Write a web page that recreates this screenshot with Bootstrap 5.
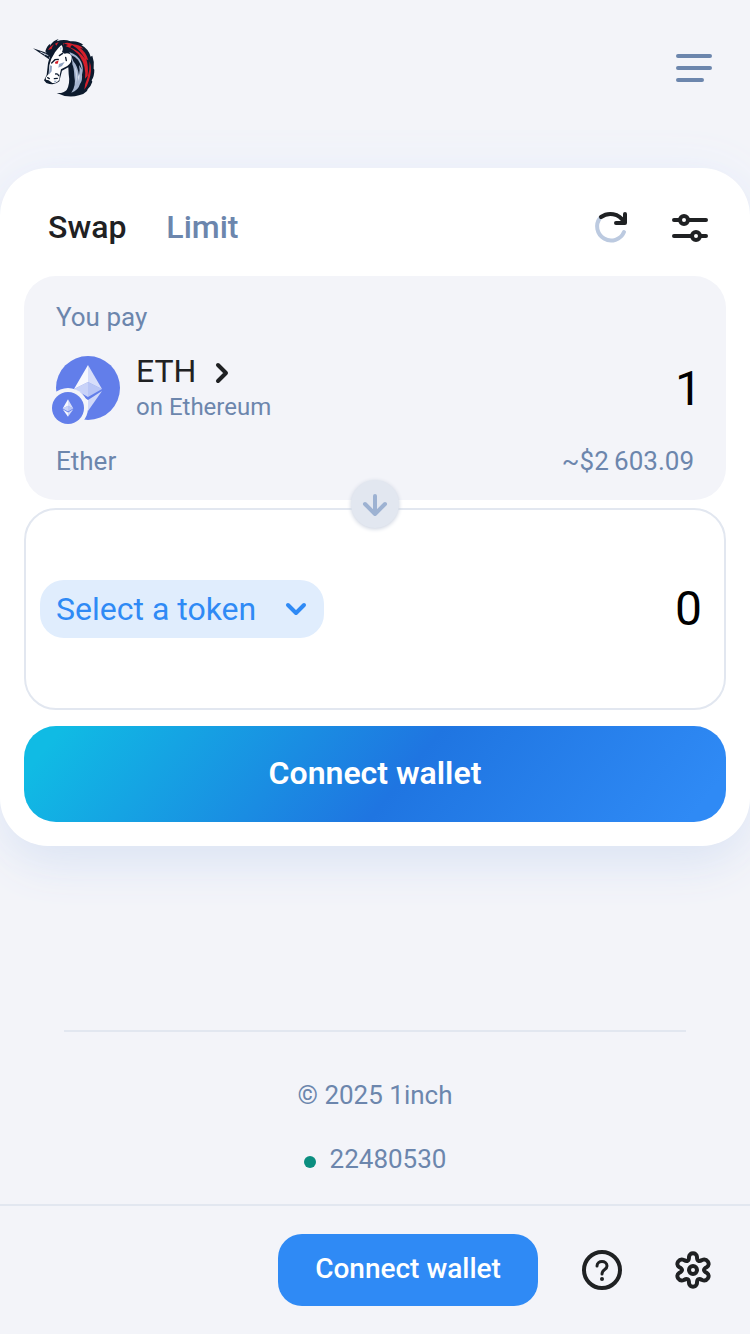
<!DOCTYPE html>
<html lang="en">
<head>
<meta charset="utf-8">
<meta name="viewport" content="width=device-width, initial-scale=1">
<title>1inch Swap</title>
<link href="https://cdn.jsdelivr.net/npm/bootstrap@5.3.0/dist/css/bootstrap.min.css" rel="stylesheet">
<style>
:root { --ink: #1f2123; --muted: #6c86ad; --page: #f3f4f9; --line: #e2e7f0; --accent: #2f8af5; }
body { font-family: Roboto, "Liberation Sans", sans-serif; font-size: 26px; line-height: 32px; color: var(--ink); background: var(--page); overflow-x: hidden; }
svg { display: block; flex: none; overflow: visible; }
.muted { color: var(--muted); }
.icon-btn { border: 0; padding: 0; background: none; color: inherit; }
.top-bar { height: 136px; padding: 0 32px; }
.swap-card { margin-top: 32px; padding: 0 24px 24px; border-radius: 48px; background: #fff; box-shadow: 0 24px 48px -8px #dce4f3, 0 0 48px #ebf0fb; }
.tab-row { height: 108px; padding: 10px 18px 0 24px; }
.tab-link { font-size: 32px; font-weight: 500; line-height: 40px; text-decoration: none; color: var(--muted); }
.tab-link.active { color: var(--ink); }
.tab-tools { gap: 44px; }
.token-box { border-radius: 32px; }
.pay-box { height: 224px; padding: 25px 32px 23px; background: var(--page); }
.get-box { min-height: 202px; margin-top: 8px; padding: 0 22px 0 14px; border: 2px solid var(--line); }
.token-name { font-size: 32px; line-height: 36px; }
.network { font-size: 24px; line-height: 36px; }
.amount { width: 240px; border: 0; padding: 0; background: none; font-size: 48px; line-height: 56px; text-align: right; color: #000; outline: 0; }
.pay-box .amount { margin-right: -8px; }
.flip-btn { width: 48px; height: 48px; background: var(--line); color: #9db2d2; box-shadow: 0 1px 4px #c8cfdd; }
.select-btn { height: 58px; padding: 0 12px 0 16px; border: 0; border-radius: 24px; background: #e0edfd; color: var(--accent); font-size: 32px; }
.connect-btn { height: 96px; margin-top: 16px; padding: 0 0 2px; border: 0; border-radius: 32px; font-size: 32px; font-weight: 600; color: #fff; background: linear-gradient(129deg, #10bbe4 5%, #1f75e1 54%, #2f8af5 95%); }
.page-end { margin: 0 64px; border-top: 2px solid var(--line); padding: 47px 0 13px; }
.block-link { gap: 14px; }
.dot { width: 12px; height: 12px; margin-top: 6px; background: #0b8e80; }
.bottom-bar { height: 130px; padding: 0 32px; gap: 44px; border-top: 2px solid var(--line); background: var(--page); }
.wallet-btn { width: 260px; height: 72px; padding: 0 0 2px; border: 0; border-radius: 24px; font-size: 28px; font-weight: 500; color: #fff; background: var(--accent); }
</style>
</head>
<body>
<div class="d-flex flex-column min-vh-100">
  <header class="top-bar d-flex align-items-center justify-content-between">
    <a href="#" aria-label="1inch home">
      <svg width="64" height="64" viewBox="24 18 192 192">
        <path fill="#0d1b2e" d="M64 64Q68 48 79 41L78 47Q88 31 104 27L98 34Q121 26 139 34Q161 31 178 44L172 45Q194 57 200 80L205 77Q212 96 209 116L211 119Q211 139 203 151L205 155Q200 171 191 178L189 183Q179 194 165 196Q132 206 98 189Q118 191 128 180Q139 161 134 132L133 112L114 122L106 154Q92 168 67 159L60 151L68 135L72 100L77 82Z"/>
        <path fill="#d51f2b" d="M72 60Q80 48 90 43Q84 51 83 57ZM93 41L104 36L97 47ZM118 40Q134 35 148 43Q166 44 178 56L168 54Q186 66 193 91L187 88Q194 111 191 137L183 146Q187 109 169 82Q155 58 118 46ZM197 94Q206 122 194 154Q190 168 181 179Q182 162 190 145Q198 120 197 94Z"/>
        <path fill="#0d1b2e" d="M144 45Q170 60 184 88Q168 63 138 52ZM120 40L132 45L118 51Z"/>
        <path fill="#a4b4cf" d="M136 66Q162 74 172 97Q180 115 174 134Q176 151 168 162Q163 181 142 188Q157 168 151 139Q150 113 145 103Q146 88 136 66Z"/>
        <path fill="#d9e1ee" d="M151 108Q164 127 155 163Q159 132 151 108ZM161 141L167 132L165 154Z"/>
        <path fill="#0d1b2e" d="M141 75Q167 83 174 119L165 105Q169 122 165 136Q161 108 148 94Z"/>
        <path fill="#fff" d="M93 67Q101 55 112 45Q120 54 114 66L122 71Q137 67 142 79Q146 96 130 108L111 118L107 136L106 149Q97 161 85 159L74 151L66 149L65 143L74 131L76 106L82 86Z"/>
        <path fill="#8fa2c0" d="M78 106L84 108L83 124L74 135ZM105 102L122 96L114 108L103 113ZM109 52L113 53L109 62ZM90 152L99 152L92 158Z"/>
        <path fill="none" stroke="#0d1b2e" stroke-width="4" stroke-linecap="round" d="M83 99L93 89L103 88M116 70L106 77M95 132Q101 130 104 137M91 146L100 145M71 143L76 146M125 82L127 92"/>
        <path fill="#d51f2b" d="M93 96L104 91L101 101L94 101Z"/>
        <path fill="#0d1b2e" d="M27 55L76 71L75 88Z"/>
        <path stroke="#c6cfdd" stroke-width="3" d="M49 66L73 77M59 76L65 72"/>
      </svg>
    </a>
    <button class="icon-btn" type="button" aria-label="Menu">
      <svg width="48" height="48" viewBox="0 0 48 48" fill="none" stroke="#6c86ad" stroke-width="4" stroke-linecap="round"><path d="M8 12H40M8 24H40M8 36H32"/></svg>
    </button>
  </header>

  <main class="swap-card">
    <div class="tab-row d-flex align-items-center justify-content-between">
      <nav class="d-flex gap-4" aria-label="Order type">
        <a class="tab-link active me-3" href="#" aria-current="page">Swap</a>
        <a class="tab-link" href="#">Limit</a>
      </nav>
      <div class="tab-tools d-flex">
        <button class="icon-btn" type="button" aria-label="Refresh">
          <svg width="34" height="48" viewBox="8 -2 34 48" fill="none" stroke-width="4" stroke-linecap="round"><path stroke="#bccae0" d="M14 13A14 14 0 1 0 38 27"/><path stroke="#1f2123" stroke-linejoin="round" d="M15 12C22 7 33 8 38 17M39 9V18H30"/></svg>
        </button>
        <button class="icon-btn" type="button" aria-label="Swap settings">
          <svg width="36" height="48" viewBox="2 -2 36 48" fill="none" stroke="#1f2123" stroke-width="4" stroke-linecap="round"><path d="M4 15H10M18 15H36M4 31H22M30 31H36"/><circle cx="14" cy="15" r="4"/><circle cx="26" cy="31" r="4"/></svg>
        </button>
      </div>
    </div>

    <section class="token-box pay-box position-relative d-flex flex-column justify-content-between">
      <label for="payAmount" class="muted">You pay</label>
      <div class="d-flex align-items-center justify-content-between">
        <button class="icon-btn d-flex align-items-center text-start" type="button">
          <svg width="80" height="72" viewBox="0 0 80 72">
            <defs><g id="eth"><path fill="#fff" fill-opacity=".95" d="M0-23L-14 1L0-6Z"/><path fill="#fff" fill-opacity=".75" d="M0-23L14 1L0-6Z"/><path fill="#fff" fill-opacity=".65" d="M-14 1L0-6V9Z"/><path fill="#fff" fill-opacity=".55" d="M0-6L14 1L0 9Z"/><path fill="#fff" fill-opacity=".95" d="M-14 3L0 12V23Z"/><path fill="#fff" fill-opacity=".7" d="M0 12L14 3L0 23Z"/></g></defs>
            <circle cx="32" cy="35" r="32" fill="#627eea"/><use href="#eth" x="32" y="35"/>
            <circle cx="12" cy="55" r="20" fill="#f3f4f9"/><circle cx="12" cy="55" r="16" fill="#627eea"/><use href="#eth" transform="translate(12 55) scale(.38)"/>
          </svg>
          <span>
            <span class="token-name d-flex align-items-center gap-2">ETH
              <svg width="32" height="32" viewBox="0 0 32 32" fill="none" stroke="#1f2123" stroke-width="4" stroke-linecap="round" stroke-linejoin="round"><path d="M14 10L22 18L14 26"/></svg>
            </span>
            <span class="network muted d-block">on Ethereum</span>
          </span>
        </button>
        <input id="payAmount" class="amount" type="text" value="1">
      </div>
      <div class="muted d-flex justify-content-between"><span>Ether</span><span>~$2&#8201;603.09</span></div>
      <button class="icon-btn flip-btn rounded-circle position-absolute top-100 start-50 translate-middle mt-1" type="button" aria-label="Switch tokens">
        <svg class="mx-auto" width="32" height="32" viewBox="0 0 32 32" fill="none" stroke="currentColor" stroke-width="4" stroke-linecap="round" stroke-linejoin="round"><path d="M16 8V26M6 16L16 26L26 16"/></svg>
      </button>
    </section>

    <section class="token-box get-box d-flex align-items-center justify-content-between">
      <button class="select-btn d-flex align-items-center gap-4" type="button">Select a token
        <svg width="32" height="32" viewBox="0 0 32 32" fill="none" stroke="currentColor" stroke-width="4" stroke-linecap="round" stroke-linejoin="round"><path d="M8 12L16 20L24 12"/></svg>
      </button>
      <input class="amount" type="text" value="0" aria-label="You receive" readonly>
    </section>

    <button class="connect-btn w-100" type="button">Connect wallet</button>
  </main>

  <footer class="mt-auto">
    <div class="page-end text-center muted">
      <p class="mb-0">© 2025 1inch</p>
      <p class="block-link d-flex align-items-center justify-content-center mt-3 mb-0 py-3"><span class="dot rounded-circle"></span>22480530</p>
    </div>
    <div class="bottom-bar d-flex align-items-center justify-content-end">
      <button class="wallet-btn" type="button">Connect wallet</button>
      <button class="icon-btn" type="button" aria-label="Help">
        <svg width="40" height="40" viewBox="0 0 40 40" fill="none" stroke="#1f2123" stroke-linecap="round"><circle cx="20" cy="20" r="18" stroke-width="4"/><path stroke-width="3" d="M15 16C15 10 25 10 25 16C25 20 20 19 20 24"/><circle cx="20" cy="29" r="2" fill="#1f2123" stroke="none"/></svg>
      </button>
      <button class="icon-btn" type="button" aria-label="Settings">
        <svg width="52" height="48" viewBox="-3 0 52 48" fill="none" stroke="#1f2123" stroke-width="4" stroke-linejoin="round"><circle cx="24" cy="24" r="4"/><path d="M20 11C20 6 28 6 28 11C28 15 30 16 33 14C38 12 42 18 38 21C34 23 34 25 38 27C42 30 38 36 33 34C30 32 28 33 28 37C28 42 20 42 20 37C20 33 18 32 15 34C10 36 6 30 10 27C14 25 14 23 10 21C6 18 10 12 15 14C18 16 20 15 20 11Z"/></svg>
      </button>
    </div>
  </footer>
</div>
<script src="https://cdn.jsdelivr.net/npm/bootstrap@5.3.0/dist/js/bootstrap.bundle.min.js"></script>
</body>
</html>
